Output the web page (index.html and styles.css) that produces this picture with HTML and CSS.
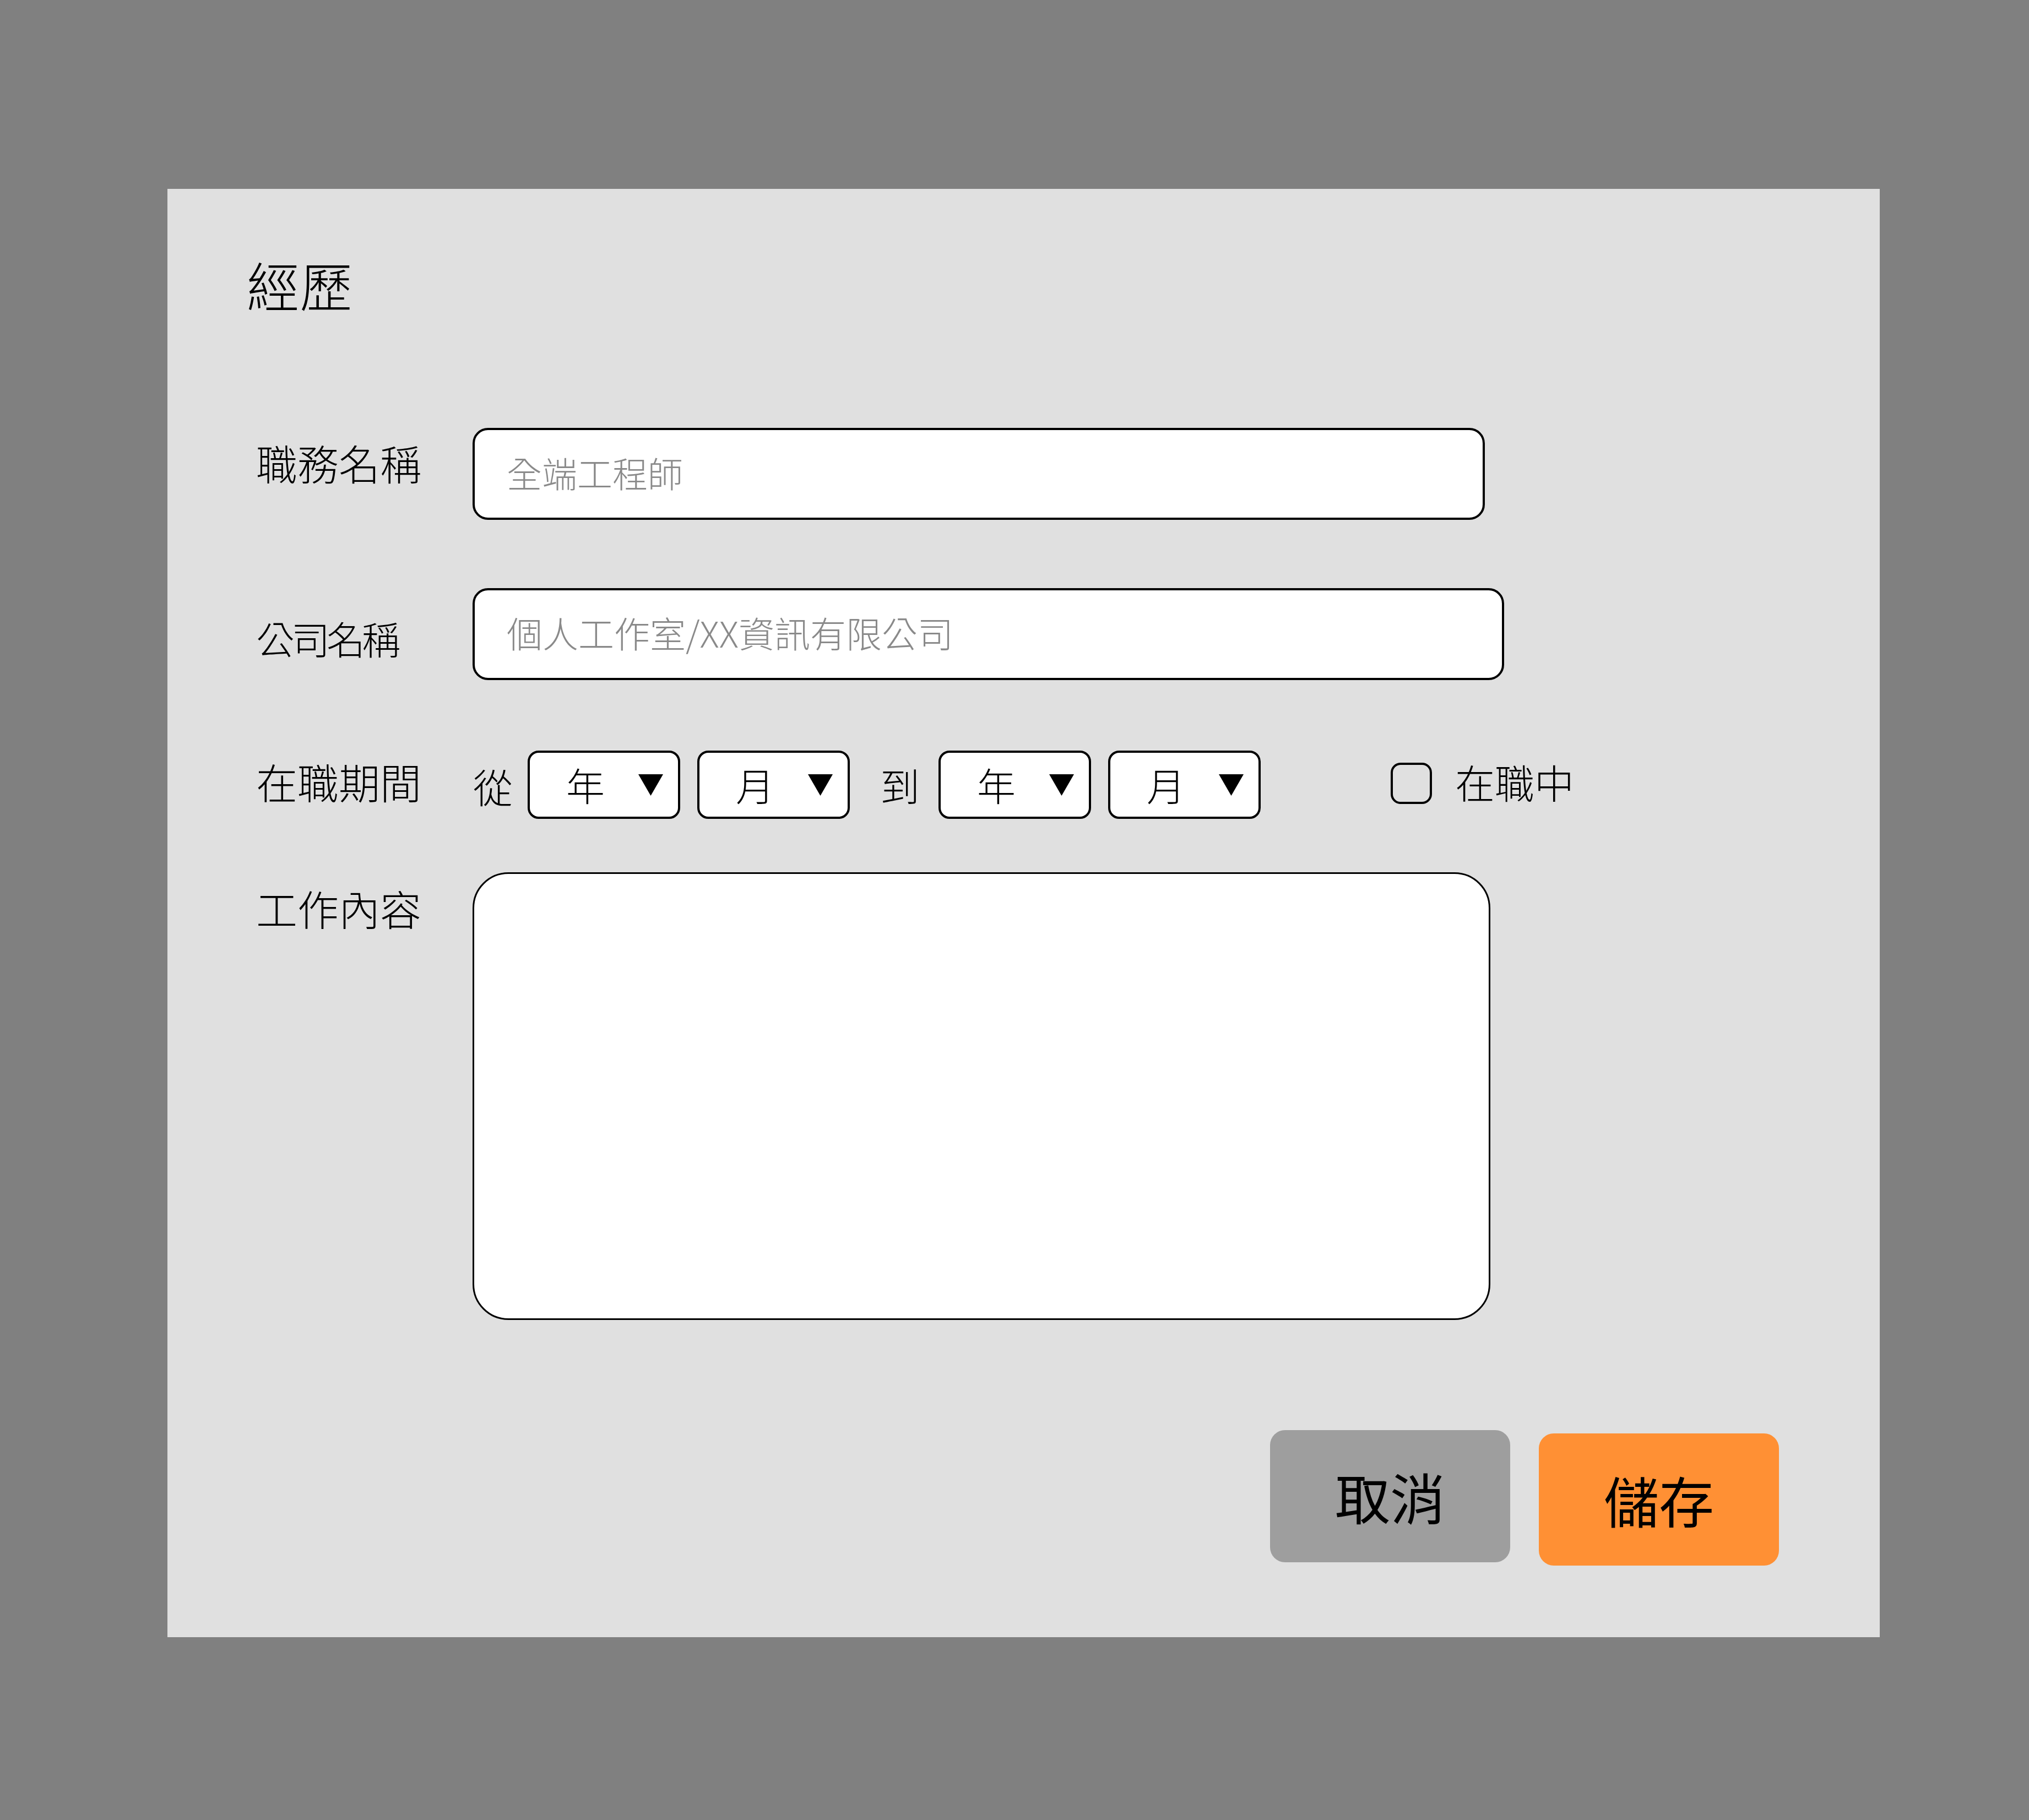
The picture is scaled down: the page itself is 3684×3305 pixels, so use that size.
FILE: index.html
```html
<!DOCTYPE html>
<html lang="zh-Hant">
<head>
<meta charset="utf-8">
<title>經歷</title>
<link rel="stylesheet" href="styles.css">
</head>
<body>
<div class="dialog">
  <h1 class="title">經歷</h1>
  <form class="form">
    <div class="row row-job">
      <label class="label label-job">職務名稱</label>
      <input class="field field-job" type="text" placeholder="全端工程師">
    </div>
    <div class="row row-company">
      <label class="label label-company">公司名稱</label>
      <input class="field field-company" type="text" placeholder="個人工作室/XX資訊有限公司">
    </div>
    <div class="row row-period">
      <label class="label label-period">在職期間</label>
      <div class="period">
        <span class="word word-from">從</span>
        <div class="select select-first"><span class="select-text">年</span><svg class="caret" viewBox="0 0 45 39"><polygon points="0,0 45,0 22.5,39"/></svg></div>
        <div class="select"><span class="select-text">月</span><svg class="caret" viewBox="0 0 45 39"><polygon points="0,0 45,0 22.5,39"/></svg></div>
        <span class="word word-to">到</span>
        <div class="select select-first"><span class="select-text">年</span><svg class="caret" viewBox="0 0 45 39"><polygon points="0,0 45,0 22.5,39"/></svg></div>
        <div class="select"><span class="select-text">月</span><svg class="caret" viewBox="0 0 45 39"><polygon points="0,0 45,0 22.5,39"/></svg></div>
        <label class="current"><input class="checkbox" type="checkbox"><span class="current-text">在職中</span></label>
      </div>
    </div>
    <div class="row row-content">
      <label class="label label-content">工作內容</label>
      <textarea class="content"></textarea>
    </div>
  </form>
  <div class="actions">
    <button class="btn btn-cancel" type="button">取消</button>
    <button class="btn btn-save" type="button">儲存</button>
  </div>
</div>
</body>
</html>
```

FILE: styles.css
```css
html, body {
  margin: 0;
  background: #808080;
}

body {
  padding: 343px 0 332px 304px;
  font-family: "Noto Sans CJK TC", "Noto Sans CJK SC", sans-serif;
  color: #000;
}

.dialog {
  width: 3109px;
  height: 2630px;
  box-sizing: border-box;
  background: #e0e0e0;
  padding: 125px 0 0 144px;
  display: flex;
  flex-direction: column;
}

.title {
  margin: 0;
  font-size: 96px;
  line-height: 1;
  font-weight: 300;
}

.form {
  margin-top: 213px;
  padding-left: 17px;
  display: flex;
  flex-direction: column;
}

.row {
  display: flex;
  align-items: flex-start;
}

.row-company { margin-top: 124px; }
.row-period { margin-top: 128px; }
.row-content { margin-top: 97px; }

.label {
  flex: 0 0 393px;
  font-size: 75px;
  line-height: 1;
  font-weight: 300;
  white-space: nowrap;
}

.label-job { margin-top: 25px; }
.label-company { margin-top: 56px; font-size: 70px; letter-spacing: -6px; }
.label-period { margin-top: 18px; }
.label-content { margin-top: 27px; }

.field {
  box-sizing: border-box;
  height: 167px;
  border: 4px solid #000;
  border-radius: 28px;
  background: #fff;
  padding: 0 0 8px 58px;
  font-family: inherit;
  font-size: 65px;
  font-weight: 300;
  outline: none;
}

.field-job { font-size: 64px; }

.field::placeholder {
  color: #8a8a8a;
}

.field-job { width: 1838px; }
.field-company { width: 1873px; }

.period {
  height: 124px;
  display: flex;
  align-items: center;
}

.word {
  font-size: 72px;
  line-height: 1;
  font-weight: 300;
}

.word-from { margin: 4px 27px 0 1px; }
.word-to { margin: 0 34px 0 55px; }

.select {
  box-sizing: border-box;
  width: 277px;
  height: 124px;
  border: 4px solid #000;
  border-radius: 20px;
  background: #fff;
  display: flex;
  align-items: center;
  justify-content: space-between;
  padding: 0 27px 0 66px;
}

.select + .select { margin-left: 31px; }

.select-text {
  font-size: 70px;
  line-height: 1;
  font-weight: 300;
}

.caret {
  width: 45px;
  height: 39px;
  fill: #000;
}

.current {
  margin-left: 236px;
  display: flex;
  align-items: center;
}

.checkbox {
  appearance: none;
  -webkit-appearance: none;
  margin: -5px 0 0;
  box-sizing: border-box;
  width: 75px;
  height: 75px;
  border: 4px solid #000;
  border-radius: 18px;
  background: transparent;
}

.current-text {
  margin: -12px 0 0 42px;
  font-size: 72px;
  line-height: 1;
  font-weight: 300;
}

.content {
  box-sizing: border-box;
  width: 1848px;
  height: 813px;
  border: 3px solid #000;
  border-radius: 65px;
  background: #fff;
  resize: none;
  outline: none;
  font-family: inherit;
  margin: 0;
}

.actions {
  margin-top: 200px;
  display: flex;
  justify-content: flex-end;
  align-items: flex-start;
  gap: 52px;
  padding-right: 183px;
}

.btn {
  width: 436px;
  height: 240px;
  border: none;
  border-radius: 27px;
  font-family: inherit;
  font-size: 100px;
  line-height: 1;
  color: #000;
  padding: 0;
}

.btn-cancel { background: #9e9e9e; }
.btn-save { background: #ff9034; margin-top: 6px; }
```
